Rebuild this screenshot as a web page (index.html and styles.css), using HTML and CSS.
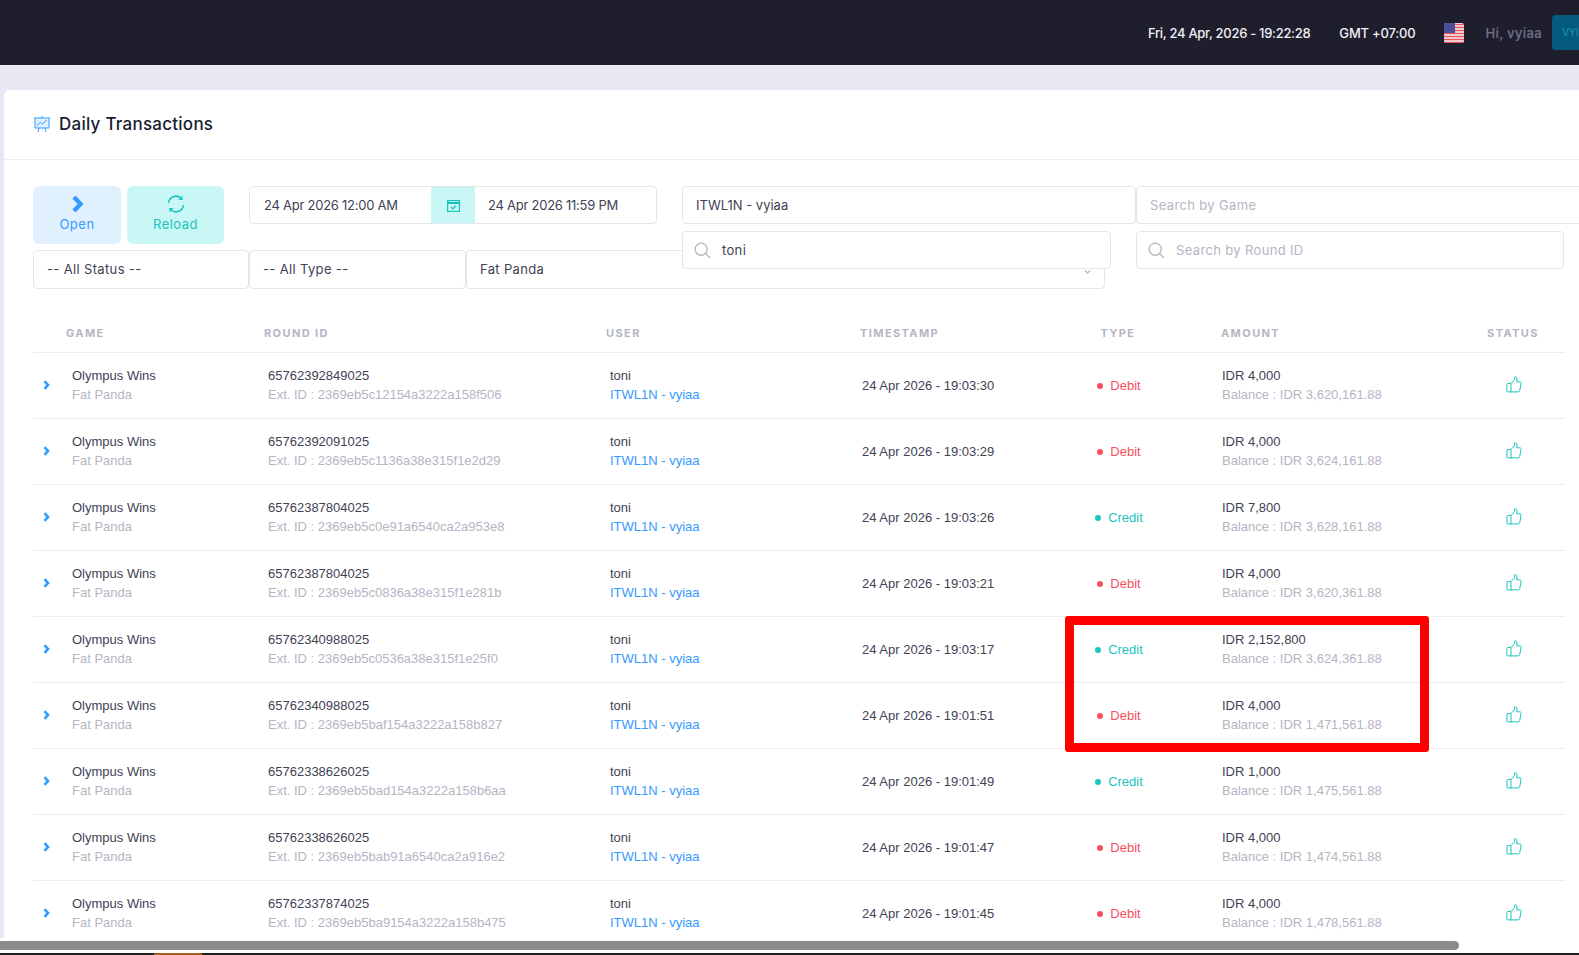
FILE: index.html
```html
<!DOCTYPE html>
<html>
  <head>
    <title>Daily Transactions</title>
    <link rel="stylesheet" href="styles.css">
  </head>
  <body>
    <svg class="icon-defs" width="0" height="0">
      <symbol id="thumb" viewBox="0 0 16 17">
        <path d="M5 7.5 8.6 3.6V1.2C8.6.6 9.1.4 9.6.6c1 .5 1.5 1.4 1.4 2.4l-.3 2.8h3.2c.8 0 1.4.7 1.2 1.5l-1.4 7.4c-.1.7-.7 1.2-1.4 1.2H1.6c-.4 0-.7-.3-.7-.7V8.2c0-.4.3-.7.7-.7H5v8.9" fill="none" stroke="#1bc5bd" stroke-width="1"/>
      </symbol>
      <symbol id="chev" viewBox="0 0 7 10">
        <path d="M1.5 1.2 5 5 1.500 8.800" fill="none" stroke="#3699ff" stroke-width="2.600"/>
      </symbol>
      <symbol id="search" viewBox="0 0 18 18">
        <circle cx="7.6" cy="7.6" r="6.4" fill="none" stroke="#b5b5c3" stroke-width="1.4"/>
        <path d="M12.4 12.4 17 17" stroke="#b5b5c3" stroke-width="1.4"/>
      </symbol>
    </svg>

    <header class="topbar">
      <span class="clock">Fri, 24 Apr, 2026 - 19:22:28</span>
      <span class="gmt">GMT +07:00</span>
      <svg class="flag" viewBox="0 0 20 20">
        <defs><clipPath id="flagclip"><rect width="20" height="20" rx="2.5"/></clipPath></defs>
        <g clip-path="url(#flagclip)">
          <rect width="20" height="20" fill="#f0f0f0"/>
          <path d="M0 1.5h20M0 4.5h20M0 7.5h20M0 10.5h20M0 13.5h20M0 16.5h20M0 19.5h20" stroke="#f0535f" stroke-width="1.5"/>
          <rect width="11" height="10" fill="#4a4f9a"/>
        </g>
      </svg>
      <span class="greet">Hi, vyiaa</span>
      <span class="avatar">VYI</span>
    </header>

    <main class="page">
      <section class="card">
        <div class="card-head">
          <svg class="title-icon" width="18" height="18" viewBox="0 0 18 18">
            <path d="M1 3h16M2 3v10h14V3" fill="#e1f0ff" stroke="#3699ff" stroke-width="1"/>
            <path d="M4 10.5 7.5 7.5l2 1.5L14 5M6 13l-1 4M12 13l1 4M9 1v2" fill="none" stroke="#3699ff" stroke-width="1"/>
          </svg>
          <h3>Daily Transactions</h3>
        </div>

        <div class="card-body">
          <div class="filters">
            <div class="filter-top">
              <div class="actions">
                <button class="btn btn-open">
                  <svg width="13" height="18" viewBox="0 0 13 18"><path d="M3 2l6.500 7L3 16" fill="none" stroke="#3699ff" stroke-width="4.400"/></svg>
                  Open
                </button>
                <button class="btn btn-reload">
                  <svg width="18" height="18" viewBox="0 0 19 19">
                    <path d="M1.500 8.500A8 8 0 0 1 15 3.500M17.500 10.500A8 8 0 0 1 4 15.500" fill="none" stroke="#1bc5bd" stroke-width="1.600"/>
                    <path d="M16.500 .8v4.500h-4.500zM2.500 18.200v-4.500h4.500z" fill="#1bc5bd"/>
                  </svg>
                  Reload
                </button>
              </div>
              <div class="date-range">
                <div class="date-cell">24 Apr 2026 12:00 AM</div>
                <div class="date-addon">
                  <svg width="13" height="13" viewBox="0 0 13 13">
                    <rect x=".6" y="1.600" width="11.800" height="10.800" fill="none" stroke="#1bc5bd" stroke-width="1.200"/>
                    <path d="M.6 4h11.800" stroke="#1bc5bd" stroke-width="2"/>
                    <path d="M4 8l1.800 1.800L9 6.800" fill="none" stroke="#1bc5bd" stroke-width="1.200"/>
                  </svg>
                </div>
                <div class="date-cell date-end">24 Apr 2026 11:59 PM</div>
              </div>
              <div class="filter-right">
                <div class="filter-line">
                  <div class="field field-agent">ITWL1N - vyiaa</div>
                  <div class="field field-game muted">Search by Game</div>
                </div>
                <div class="filter-line search-line">
                  <div class="field field-search">
                    <svg width="17" height="17"><use href="#search"/></svg>
                    <span>toni</span>
                  </div>
                  <div class="field field-round muted">
                    <svg width="17" height="17"><use href="#search"/></svg>
                    <span>Search by Round ID</span>
                  </div>
                </div>
              </div>
            </div>
            <div class="filter-bottom">
              <div class="field sel-status">-- All Status --</div>
              <div class="field sel-type">-- All Type --</div>
              <div class="field sel-provider">
                Fat Panda
                <svg class="caret" width="7" height="4" viewBox="0 0 7 4"><path d="M.8.5 3.500 3 6.200.5" fill="none" stroke="#7e8299" stroke-width="1"/></svg>
              </div>
            </div>
          </div>

          <table class="trx-table">
            <colgroup>
              <col class="c-toggle"><col class="c-game"><col class="c-round"><col class="c-user"><col class="c-time"><col class="c-type"><col class="c-amount"><col class="c-status">
            </colgroup>
            <thead>
              <tr>
                <th></th><th>Game</th><th>Round ID</th><th>User</th><th>Timestamp</th><th class="center th-type">Type</th><th class="th-amount">Amount</th><th class="center">Status</th>
              </tr>
            </thead>
            <tbody>
              <tr>
                <td class="toggle"><svg width="7" height="10"><use href="#chev"/></svg></td>
                <td class="td-game">Olympus Wins<small>Fat Panda</small></td>
                <td class="td-round">65762392849025<small>Ext. ID : 2369eb5c12154a3222a158f506</small></td>
                <td class="td-user">toni<a>ITWL1N - vyiaa</a></td>
                <td class="td-time">24 Apr 2026 - 19:03:30</td>
                <td class="center"><span class="tag debit">Debit</span></td>
                <td class="td-amount">IDR 4,000<small>Balance : IDR 3,620,161.88</small></td>
                <td class="center"><svg width="16" height="17"><use href="#thumb"/></svg></td>
              </tr>
              <tr>
                <td class="toggle"><svg width="7" height="10"><use href="#chev"/></svg></td>
                <td class="td-game">Olympus Wins<small>Fat Panda</small></td>
                <td class="td-round">65762392091025<small>Ext. ID : 2369eb5c1136a38e315f1e2d29</small></td>
                <td class="td-user">toni<a>ITWL1N - vyiaa</a></td>
                <td class="td-time">24 Apr 2026 - 19:03:29</td>
                <td class="center"><span class="tag debit">Debit</span></td>
                <td class="td-amount">IDR 4,000<small>Balance : IDR 3,624,161.88</small></td>
                <td class="center"><svg width="16" height="17"><use href="#thumb"/></svg></td>
              </tr>
              <tr>
                <td class="toggle"><svg width="7" height="10"><use href="#chev"/></svg></td>
                <td class="td-game">Olympus Wins<small>Fat Panda</small></td>
                <td class="td-round">65762387804025<small>Ext. ID : 2369eb5c0e91a6540ca2a953e8</small></td>
                <td class="td-user">toni<a>ITWL1N - vyiaa</a></td>
                <td class="td-time">24 Apr 2026 - 19:03:26</td>
                <td class="center"><span class="tag credit">Credit</span></td>
                <td class="td-amount">IDR 7,800<small>Balance : IDR 3,628,161.88</small></td>
                <td class="center"><svg width="16" height="17"><use href="#thumb"/></svg></td>
              </tr>
              <tr>
                <td class="toggle"><svg width="7" height="10"><use href="#chev"/></svg></td>
                <td class="td-game">Olympus Wins<small>Fat Panda</small></td>
                <td class="td-round">65762387804025<small>Ext. ID : 2369eb5c0836a38e315f1e281b</small></td>
                <td class="td-user">toni<a>ITWL1N - vyiaa</a></td>
                <td class="td-time">24 Apr 2026 - 19:03:21</td>
                <td class="center"><span class="tag debit">Debit</span></td>
                <td class="td-amount">IDR 4,000<small>Balance : IDR 3,620,361.88</small></td>
                <td class="center"><svg width="16" height="17"><use href="#thumb"/></svg></td>
              </tr>
              <tr>
                <td class="toggle"><svg width="7" height="10"><use href="#chev"/></svg></td>
                <td class="td-game">Olympus Wins<small>Fat Panda</small></td>
                <td class="td-round">65762340988025<small>Ext. ID : 2369eb5c0536a38e315f1e25f0</small></td>
                <td class="td-user">toni<a>ITWL1N - vyiaa</a></td>
                <td class="td-time">24 Apr 2026 - 19:03:17</td>
                <td class="center"><span class="tag credit">Credit</span></td>
                <td class="td-amount">IDR 2,152,800<small>Balance : IDR 3,624,361.88</small></td>
                <td class="center"><svg width="16" height="17"><use href="#thumb"/></svg></td>
              </tr>
              <tr>
                <td class="toggle"><svg width="7" height="10"><use href="#chev"/></svg></td>
                <td class="td-game">Olympus Wins<small>Fat Panda</small></td>
                <td class="td-round">65762340988025<small>Ext. ID : 2369eb5baf154a3222a158b827</small></td>
                <td class="td-user">toni<a>ITWL1N - vyiaa</a></td>
                <td class="td-time">24 Apr 2026 - 19:01:51</td>
                <td class="center"><span class="tag debit">Debit</span></td>
                <td class="td-amount">IDR 4,000<small>Balance : IDR 1,471,561.88</small></td>
                <td class="center"><svg width="16" height="17"><use href="#thumb"/></svg></td>
              </tr>
              <tr>
                <td class="toggle"><svg width="7" height="10"><use href="#chev"/></svg></td>
                <td class="td-game">Olympus Wins<small>Fat Panda</small></td>
                <td class="td-round">65762338626025<small>Ext. ID : 2369eb5bad154a3222a158b6aa</small></td>
                <td class="td-user">toni<a>ITWL1N - vyiaa</a></td>
                <td class="td-time">24 Apr 2026 - 19:01:49</td>
                <td class="center"><span class="tag credit">Credit</span></td>
                <td class="td-amount">IDR 1,000<small>Balance : IDR 1,475,561.88</small></td>
                <td class="center"><svg width="16" height="17"><use href="#thumb"/></svg></td>
              </tr>
              <tr>
                <td class="toggle"><svg width="7" height="10"><use href="#chev"/></svg></td>
                <td class="td-game">Olympus Wins<small>Fat Panda</small></td>
                <td class="td-round">65762338626025<small>Ext. ID : 2369eb5bab91a6540ca2a916e2</small></td>
                <td class="td-user">toni<a>ITWL1N - vyiaa</a></td>
                <td class="td-time">24 Apr 2026 - 19:01:47</td>
                <td class="center"><span class="tag debit">Debit</span></td>
                <td class="td-amount">IDR 4,000<small>Balance : IDR 1,474,561.88</small></td>
                <td class="center"><svg width="16" height="17"><use href="#thumb"/></svg></td>
              </tr>
              <tr>
                <td class="toggle"><svg width="7" height="10"><use href="#chev"/></svg></td>
                <td class="td-game">Olympus Wins<small>Fat Panda</small></td>
                <td class="td-round">65762337874025<small>Ext. ID : 2369eb5ba9154a3222a158b475</small></td>
                <td class="td-user">toni<a>ITWL1N - vyiaa</a></td>
                <td class="td-time">24 Apr 2026 - 19:01:45</td>
                <td class="center"><span class="tag debit">Debit</span></td>
                <td class="td-amount">IDR 4,000<small>Balance : IDR 1,478,561.88</small></td>
                <td class="center"><svg width="16" height="17"><use href="#thumb"/></svg></td>
              </tr>
            </tbody>
          </table>
        </div>
      </section>
    </main>

    <div class="hscroll"><div class="hscroll-thumb"></div></div>
    <div class="taskbar"><span class="task-item"></span></div>

    <div class="redbox"></div>
  </body>
</html>
```

FILE: styles.css
```css
* {
  box-sizing: border-box;
}
html,
body {
  margin: 0;
  height: 100%;
  overflow: hidden;
}
body {
  display: flex;
  flex-direction: column;
  font-family: Inter, "Noto Sans", sans-serif;
  font-size: 13px;
  color: #3f4254;
  background: #e8e8f3;
}
.icon-defs {
  position: absolute;
}

/* top bar */
.topbar {
  flex: none;
  height: 65px;
  background: #1e1e2d;
  display: flex;
  align-items: center;
  justify-content: flex-end;
  white-space: nowrap;
  font-weight: 500;
  color: #f0f0f5;
  margin-right: -38px;
}
.clock {
  margin-right: 29px;
  letter-spacing: -0.3px;
}
.gmt {
  margin-right: 29px;
  letter-spacing: -0.2px;
}
.flag {
  width: 20px;
  height: 20px;
  margin-right: 21px;
}
.greet {
  color: #6b6c84;
  margin-right: 10px;
  letter-spacing: 0.3px;
  font-weight: 600;
}
.avatar {
  width: 65px;
  height: 35px;
  background: #055b7d;
  color: #1590ab;
  border-radius: 4px;
  font-size: 10px;
  padding-left: 10px;
  line-height: 35px;
}

/* card */
.page {
  flex: 1;
  min-height: 0;
  padding: 25px 0 0 4px;
  overflow: hidden;
}
.card {
  background: #fff;
  border-radius: 6px 0 0 0;
  height: 100%;
}
.card-head {
  height: 70px;
  border-bottom: 1px solid #ebedf3;
  display: flex;
  align-items: center;
  padding-left: 29px;
  padding-bottom: 2px;
}
.title-icon {
  margin-right: 8px;
}
.card-head h3 {
  margin: 0;
  font-size: 17px;
  font-weight: 500;
  letter-spacing: 0.25px;
  color: #181c32;
}
.card-body {
  padding: 26px 0 0 29px;
}

/* filters */
.filter-top {
  display: flex;
  height: 58px;
}
.filter-top > *,
.filter-line > *,
.filter-bottom > * {
  flex: none;
}
.actions {
  display: flex;
  gap: 6px;
  width: 216px;
}
.btn {
  border: none;
  border-radius: 6px;
  height: 58px;
  font-family: inherit;
  font-size: 13px;
  letter-spacing: 0.5px;
  display: flex;
  flex-direction: column;
  align-items: center;
  justify-content: flex-start;
  padding: 9px 0 0;
  gap: 3px;
}
.btn-open {
  width: 88px;
  background: #e1f0ff;
  color: #3699ff;
}
.btn-reload {
  width: 97px;
  background: #c9f7f5;
  color: #1bc5bd;
}
.date-range {
  display: flex;
  width: 408px;
  height: 38px;
  border: 1px solid #e4e6ef;
  border-radius: 4px;
  margin-right: 25px;
}
.date-cell {
  width: 181px;
  padding-left: 14px;
  line-height: 36px;
  white-space: nowrap;
  letter-spacing: -0.25px;
}
.date-end {
  width: 181px;
  padding-left: 13px;
}
.date-addon {
  width: 44px;
  background: #c9f7f5;
  display: flex;
  align-items: center;
  justify-content: center;
}
.filter-line {
  display: flex;
  height: 38px;
  margin-bottom: 7px;
}
.search-line {
  position: relative;
  z-index: 1;
}
.field {
  height: 38px;
  border: 1px solid #e4e6ef;
  border-radius: 4px;
  background: #fff;
  display: flex;
  align-items: center;
  padding-left: 13px;
  white-space: nowrap;
  letter-spacing: 0.35px;
}
.muted {
  color: #b5b5c3;
}
.field-agent {
  width: 454px;
  letter-spacing: 0;
}
.field-game {
  width: 460px;
}
.field-search {
  width: 429px;
  margin-right: 25px;
  padding-left: 11px;
  gap: 11px;
}
.field-round {
  width: 428px;
  padding-left: 11px;
  gap: 11px;
}
.filter-bottom {
  display: flex;
  margin-top: 6px;
}
.filter-bottom .field {
  height: 39px;
  padding-bottom: 2px;
}
.sel-status {
  width: 216px;
}
.sel-type {
  width: 217px;
}
.sel-provider {
  width: 639px;
  position: relative;
}
.caret {
  position: absolute;
  right: 13px;
  top: 19px;
}

/* table */
.trx-table {
  width: 1532px;
  table-layout: fixed;
  border-collapse: collapse;
  margin-top: 24px;
  font-family: "Liberation Sans", Arial, sans-serif;
  font-size: 13px;
}
.c-toggle { width: 33px; }
.c-game { width: 198px; }
.c-round { width: 342px; }
.c-user { width: 254px; }
.c-time { width: 200px; }
.c-type { width: 118px; }
.c-amount { width: 283px; }
.c-status { width: 104px; }

.trx-table th {
  height: 39px;
  padding: 2px 0 0;
  text-align: left;
  font-family: Inter, "Noto Sans", sans-serif;
  font-size: 11px;
  font-weight: 700;
  letter-spacing: 1.4px;
  text-transform: uppercase;
  color: #b5b5c3;
}
.trx-table th.center,
.trx-table td.center {
  text-align: center;
}
.trx-table th.th-type {
  padding-right: 2px;
}
.trx-table th.th-amount {
  padding-left: 43px;
}
.trx-table tr {
  border-top: 1px solid #ebedf3;
}
.trx-table thead tr {
  border-top: none;
}
.trx-table td {
  height: 66px;
  padding: 0;
  line-height: 19px;
  vertical-align: middle;
  white-space: nowrap;
}
.trx-table small,
.trx-table a {
  display: block;
  font-size: 13px;
}
.trx-table small {
  color: #b5b5c3;
}
.trx-table a {
  color: #3699ff;
}
.toggle {
  padding-left: 10px !important;
}
.toggle svg {
  display: block;
}
.td-game { padding-left: 6px !important; }
.td-round { padding-left: 4px !important; }
.td-user { padding-left: 4px !important; }
.td-time { padding-left: 2px !important; }
.td-amount { padding-left: 44px !important; }
.tag::before {
  content: "";
  display: inline-block;
  width: 6px;
  height: 6px;
  border-radius: 50%;
  margin-right: 7px;
  vertical-align: 1px;
}
.credit { color: #1bc5bd; }
.credit::before { background: #1bc5bd; }
.debit { color: #f64e60; }
.debit::before { background: #f64e60; }
.center svg {
  vertical-align: middle;
  position: relative;
  left: 1px;
  top: -2px;
}

/* bottom */
.hscroll {
  flex: none;
  height: 15px;
  background: #fff;
  padding-top: 3px;
}
.hscroll-thumb {
  width: 1459px;
  height: 9px;
  background: #8c8c8c;
  border-radius: 0 5px 5px 0;
}
.taskbar {
  flex: none;
  height: 2px;
  background: #202020;
  padding-left: 154px;
}
.task-item {
  display: block;
  width: 48px;
  height: 2px;
  background: #a85f1e;
}

/* annotation */
.redbox {
  position: absolute;
  left: 1065px;
  top: 616px;
  width: 364px;
  height: 136px;
  border: 9px solid #f00;
  border-radius: 3px;
}
```
